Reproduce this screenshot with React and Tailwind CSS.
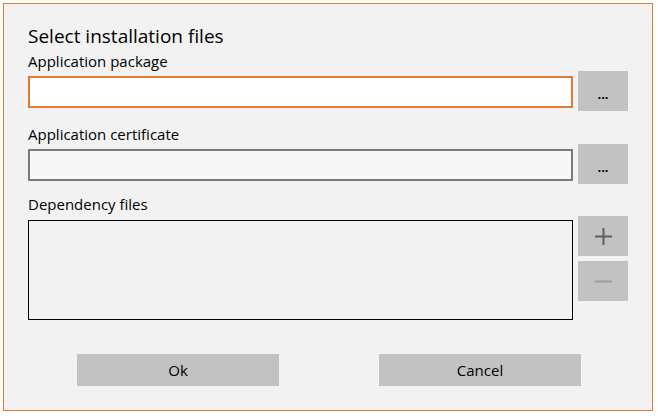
import React from "react";

const FONT = { fontFamily: '"Open Sans", "Noto Sans", sans-serif' };

const GrayButton = ({ children, className = "" }) => (
  <div className={`bg-[#c2c2c2] flex items-center justify-center text-black ${className}`}>
    {children}
  </div>
);

const App = () => {
  return (
    <div className="w-[658px] h-[416px] bg-white p-[3px]" style={FONT}>
      <div className="w-[650px] h-[408px] border border-[#df7b34] bg-[#f2f2f2] pl-[24px] pt-[19px]">
        <div className="text-[19px] leading-[26px] text-black">Select installation files</div>

        <div className="mt-[2px] text-[15px] leading-[20px] text-black">Application package</div>
        <div className="flex gap-[5px]">
          <div className="mt-[5px] w-[545px] h-[32px] border-2 border-[#df7b34] bg-white" />
          <GrayButton className="w-[50px] h-[40px] text-[13px] font-bold pt-[8px]">...</GrayButton>
        </div>

        <div className="mt-[13px] text-[15px] leading-[20px] text-black">Application certificate</div>
        <div className="flex gap-[5px]">
          <div className="mt-[5px] w-[545px] h-[32px] border-2 border-[#7a7a7a] bg-[#f7f7f7]" />
          <GrayButton className="w-[50px] h-[40px] text-[13px] font-bold pt-[8px]">...</GrayButton>
        </div>

        <div className="mt-[10px] text-[15px] leading-[20px] text-black">Dependency files</div>
        <div className="mt-[2px] flex gap-[5px]">
          <div className="mt-[4px] w-[545px] h-[100px] border border-black bg-[#f2f2f2]" />
          <div className="flex flex-col gap-[5px]">
            <GrayButton className="w-[50px] h-[40px]">
              <svg width="17" height="17" viewBox="0 0 17 17">
                <rect x="0" y="7.5" width="17" height="2" fill="#5e5e5e" />
                <rect x="7.5" y="0" width="2" height="17" fill="#5e5e5e" />
              </svg>
            </GrayButton>
            <GrayButton className="w-[50px] h-[40px]">
              <svg width="17" height="17" viewBox="0 0 17 17">
                <rect x="0" y="7.5" width="17" height="2" fill="#9c9c9c" />
              </svg>
            </GrayButton>
          </div>
        </div>

        <div className="mt-[34px] pl-[49px] flex gap-[100px]">
          <GrayButton className="w-[202px] h-[32px] text-[15px]">Ok</GrayButton>
          <GrayButton className="w-[202px] h-[32px] text-[15px]">Cancel</GrayButton>
        </div>
      </div>
    </div>
  );
};

export default App;
